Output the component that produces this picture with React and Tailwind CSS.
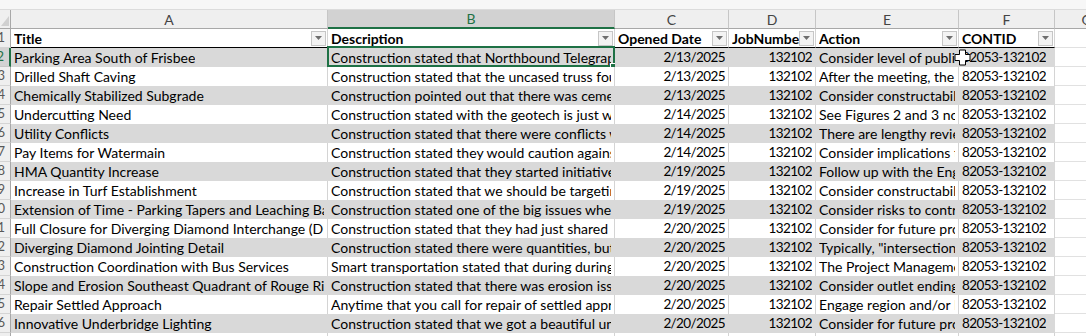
import React from "react";

const columns = [
  { key: "A", title: "Title", cls: "w-[317px]" },
  { key: "B", title: "Description", cls: "w-[287px]" },
  { key: "C", title: "Opened Date", cls: "w-[114px]", right: true, num: true },
  { key: "D", title: "JobNumber", cls: "w-[87px]", right: true, num: true },
  { key: "E", title: "Action", cls: "w-[143px]" },
  { key: "F", title: "CONTID", cls: "w-[96px]", num: true },
];

const rows = [
  ["Parking Area South of Frisbee", "Construction stated that Northbound Telegraph Road was", "2/13/2025", "Consider level of public involvement"],
  ["Drilled Shaft Caving", "Construction stated that the uncased truss foundations", "2/13/2025", "After the meeting, the team"],
  ["Chemically Stabilized Subgrade", "Construction pointed out that there was cement", "2/13/2025", "Consider constructability"],
  ["Undercutting Need", "Construction stated with the geotech is just what", "2/14/2025", "See Figures 2 and 3 noted"],
  ["Utility Conflicts", "Construction stated that there were conflicts with", "2/14/2025", "There are lengthy reviews"],
  ["Pay Items for Watermain", "Construction stated they would caution against", "2/14/2025", "Consider implications to"],
  ["HMA Quantity Increase", "Construction stated that they started initiatives", "2/19/2025", "Follow up with the Engineer"],
  ["Increase in Turf Establishment", "Construction stated that we should be targeting", "2/19/2025", "Consider constructability"],
  ["Extension of Time - Parking Tapers and Leaching Basins", "Construction stated one of the big issues where", "2/19/2025", "Consider risks to contractor"],
  ["Full Closure for Diverging Diamond Interchange (DDI)", "Construction stated that they had just shared the", "2/20/2025", "Consider for future projects"],
  ["Diverging Diamond Jointing Detail", "Construction stated there were quantities, but", "2/20/2025", "Typically, \"intersection"],
  ["Construction Coordination with Bus Services", "Smart transportation stated that during during the", "2/20/2025", "The Project Management"],
  ["Slope and Erosion Southeast Quadrant of Rouge River", "Construction stated that there was erosion issues", "2/20/2025", "Consider outlet ending"],
  ["Repair Settled Approach", "Anytime that you call for repair of settled approaches", "2/20/2025", "Engage region and/or Local"],
  ["Innovative Underbridge Lighting", "Construction stated that we got a beautiful underbridge", "2/20/2025", "Consider for future projects"],
];

function FilterButton() {
  return (
    <span className="mr-px flex h-[15px] w-[15px] shrink-0 items-center justify-center border border-[#c6c6c6] bg-[#f3f3f3]">
      <svg width="7" height="4" viewBox="0 0 7 4">
        <path d="M0 0h7L3.5 4z" fill="#6e6e6e" />
      </svg>
    </span>
  );
}

function RowHead({ n, active }) {
  return (
    <div
      className={
        "flex h-full w-[11px] shrink-0 items-center justify-end overflow-hidden border-b border-r pr-[5px] text-[13px] " +
        (active
          ? "border-b-[#c6c6c6] border-r-2 border-r-[#1e7145] bg-[#d2d2d2] text-[#1e7145]"
          : "border-b-[#d4d4d4] border-r-[#a8a8a8] bg-[#efefef] text-[#595959]")
      }
    >
      <span className="whitespace-nowrap">{n}</span>
    </div>
  );
}

function GridTail() {
  return <div className="h-full w-[64px] shrink-0 border-b border-r border-[#e1e1e1] bg-white" />;
}

export default function App() {
  return (
    <div className="relative h-[336px] w-[1086px] overflow-hidden bg-white font-['Lato',sans-serif] text-[14px] text-black">
      {/* strip under the formula bar */}
      <div className="h-[10px] border-b border-[#dcdcdc] bg-[#f7f7f7]" />

      {/* column letters */}
      <div className="flex h-[19px]">
        <div className="relative w-[11px] shrink-0 border-b border-r border-[#a8a8a8] bg-[#efefef]">
          <svg className="absolute bottom-[2px] right-[1px]" width="8" height="10" viewBox="0 0 8 10">
            <path d="M8 0v10H0z" fill="#d0d0d0" />
          </svg>
        </div>
        {columns.map((c) => (
          <div
            key={c.key}
            className={
              c.cls +
              " flex shrink-0 items-center justify-center border-r text-[14px] " +
              (c.key === "B"
                ? "border-b-2 border-b-[#1e7145] border-r-[#c6c6c6] bg-[#d2d2d2] text-[#1e7145]"
                : "border-b border-b-[#a8a8a8] border-r-[#c6c6c6] bg-[#efefef] text-[#444444]")
            }
          >
            {c.key}
          </div>
        ))}
        <div className="flex w-[64px] shrink-0 items-center justify-center border-b border-r border-[#a8a8a8] border-r-[#c6c6c6] bg-[#efefef] text-[#444444]">
          G
        </div>
      </div>

      {/* table header row */}
      <div className="flex h-[19px]">
        <RowHead n={1} />
        {columns.map((c) => (
          <div
            key={c.key}
            className={c.cls + " flex shrink-0 items-center border-b border-r border-b-black border-r-[#d4d4d4] bg-white pl-[3px] font-bold"}
          >
            <span className="min-w-0 flex-1 overflow-hidden whitespace-nowrap">{c.title}</span>
            <FilterButton />
          </div>
        ))}
        <GridTail />
      </div>

      {/* data rows */}
      {rows.map((r, i) => {
        const n = i + 2;
        const gray = n % 2 === 0;
        const bg = gray ? "bg-[#d9d9d9] border-r-[#d9d9d9]" : "bg-white border-r-[#d4d4d4]";
        const values = [r[0], r[1], r[2], "132102", r[3], "82053-132102"];
        return (
          <div key={n} className="flex h-[19px]">
            <RowHead n={n} active={n === 2} />
            {columns.map((c, j) => (
              <div
                key={c.key}
                className={
                  c.cls +
                  " relative flex shrink-0 items-center border-r px-[3px] " +
                  bg +
                  (c.right ? " justify-end" : "")
                }
              >
                <span
                  className={
                    "overflow-hidden whitespace-nowrap" +
                    (c.num ? " text-[13.5px] tracking-[-0.6px]" : "")
                  }
                >
                  {values[j]}
                </span>
                {n === 2 && c.key === "B" && (
                  <>
                    <span className="pointer-events-none absolute bottom-0 left-[-1px] right-[-1px] top-[-2px] border-2 border-[#1e7145]" />
                    <span className="absolute bottom-[-3px] right-[-3px] h-[7px] w-[7px] border border-white bg-[#1e7145]" />
                  </>
                )}
              </div>
            ))}
            <GridTail />
          </div>
        );
      })}

      {/* row 17, partly in view */}
      <div className="flex h-[19px]">
        <RowHead n={17} />
        {columns.map((c) => (
          <div key={c.key} className={c.cls + " shrink-0 border-r border-[#d4d4d4] bg-white"} />
        ))}
        <GridTail />
      </div>

      {/* cell pointer */}
      <svg className="pointer-events-none absolute left-[954px] top-[49px]" width="17" height="17" viewBox="0 0 17 17">
        <path
          d="M5.5 1h6v4.5H16v6h-4.5V16h-6v-4.5H1v-6h4.5z"
          fill="#ffffff"
          stroke="#000000"
          strokeWidth="1"
        />
      </svg>
    </div>
  );
}
